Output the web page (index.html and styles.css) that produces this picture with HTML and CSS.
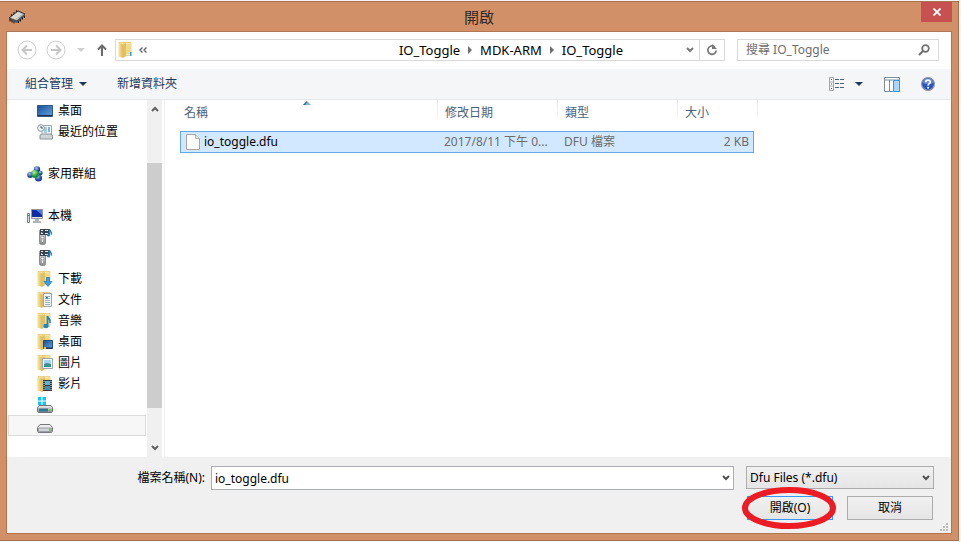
FILE: index.html
```html
<!DOCTYPE html>
<html lang="zh-Hant">
<head>
<meta charset="utf-8">
<title>開啟</title>
<link rel="stylesheet" href="styles.css">
</head>
<body>
<svg class="defs" aria-hidden="true">
  <defs>
    <linearGradient id="gold" x1="0" x2="1"><stop offset="0" stop-color="#f7e596"/><stop offset="1" stop-color="#dcb65a"/></linearGradient>
    <linearGradient id="screen" x1="0" y1="0" x2="1" y2="1"><stop offset="0" stop-color="#1c4d97"/><stop offset="1" stop-color="#5aa6e4"/></linearGradient>
    <linearGradient id="metal" x1="0" y1="0" x2="0" y2="1"><stop offset="0" stop-color="#f4f4f6"/><stop offset="1" stop-color="#85878c"/></linearGradient>
    <radialGradient id="green" cx=".4" cy=".3"><stop offset="0" stop-color="#b8f2a6"/><stop offset="1" stop-color="#1b9433"/></radialGradient>
    <radialGradient id="blue" cx=".4" cy=".3"><stop offset="0" stop-color="#a9c4f4"/><stop offset="1" stop-color="#1c429f"/></radialGradient>
    <symbol id="folder" viewBox="0 0 16 16"><path d="M1 .500h6v14H1z" fill="#f5e294" stroke="#dcc06c" stroke-width=".6"/><path d="M6 .500h7v13H6z" fill="#f8eaa8" stroke="#dbbb5e" stroke-width=".6"/><path d="M1 1l4 1.500V16l-4-1.500z" fill="url(#gold)"/><path d="M5 3l3-2v13l-3 2z" fill="#e0c064"/><path d="M8 2h4v10H8z" fill="#f0d987"/></symbol>
    <symbol id="player" viewBox="0 0 16 16"><rect x="2.500" y=".500" width="6" height="15" rx="2" fill="url(#metal)" stroke="#8c8c8c"/><path d="M5 7h1v6H5z" fill="#f6f6f6"/><circle cx="5.500" cy="8.500" r="1.500" fill="#eee" stroke="#999"/><path d="M3 0h9v6H3z" fill="#3c4348"/><path d="M4 1h2v1H4zM4 4h2v1H4zM8 1h3v1H8zM8 4h3v1H8z" fill="#dfe9ef"/><path d="M4 3h1v1H4z" fill="#6fe04c"/><path d="M12.500 6V0c0 2 2.500 2 2 5.500" fill="none" stroke="#1684c8" stroke-width="1.400"/><circle cx="11.500" cy="6" r="1.600" fill="#1684c8"/></symbol>
    <symbol id="chevron" viewBox="0 0 8 6"><path d="M1 1l3 3 3-3" fill="none" stroke="currentColor" stroke-width="2"/></symbol>
    <symbol id="tri-right" viewBox="0 0 4 8"><path d="M0 0l4 4-4 4z" fill="#6e6e6e"/></symbol>
    <symbol id="tri-down" viewBox="0 0 8 4"><path d="M0 0h8L4 4z" fill="currentColor"/></symbol>
  </defs>
</svg>
<main class="window">
  <header class="titlebar">
    <svg class="chip" viewBox="0 0 18 14"><path d="M1 8L10 1l7 3-8 7z" fill="#b9bab5" stroke="#34342f"/><path d="M3 7.500L10 2l4 2-7 5.500z" fill="#d8d8d3"/><path d="M1 8l8 3 8-7v2l-8 7-8-3z" fill="#555"/><path d="M2 9.500v2M4 10.500v2M6 11.500v2M10.500 11v2M12.500 9.500v2M14.500 7.500v2M16.500 6v2" stroke="#111"/><path d="M3 5.500l1-1M5.500 3.500l1-1M8 1.500l1-1" stroke="#111" stroke-width="1.200"/></svg>
    <h1 class="title">開啟</h1>
    <button class="close" aria-label="關閉"><svg viewBox="0 0 8 8"><path d="M.5.500l7 7M7.500.500l-7 7" stroke="#fff" stroke-width="1.800"/></svg></button>
  </header>
  <div class="dialog">
    <nav class="navbar">
      <button class="round" aria-label="上一頁"><svg viewBox="0 0 20 20"><circle cx="10" cy="10" r="9" fill="none" stroke="#cfcfcf"/><path d="M15 10H6M10 5.500L5.500 10l4.500 4.500" fill="none" stroke="#c6c6c6" stroke-width="2"/></svg></button>
      <button class="round" aria-label="下一頁"><svg viewBox="0 0 20 20"><circle cx="10" cy="10" r="9" fill="none" stroke="#cfcfcf"/><path d="M5 10h9M10 5.500l4.500 4.500-4.500 4.500" fill="none" stroke="#c6c6c6" stroke-width="2"/></svg></button>
      <button class="history" aria-label="最近的位置"><svg viewBox="0 0 8 4"><use href="#tri-down"/></svg></button>
      <button class="up" aria-label="上一層"><svg viewBox="0 0 10 12"><path d="M5 12V2M1 5.500l4-4 4 4" fill="none" stroke="#6b6b6b" stroke-width="2"/></svg></button>
      <div class="address">
        <svg class="address-icon" viewBox="0 0 16 16"><use href="#folder"/><path d="M12 10h1.500v4H12z" fill="#3fa0e8"/></svg>
        <button class="overflow" aria-label="上層資料夾"><svg viewBox="0 0 8 6"><path d="M3.500.500L1 3l2.500 2.500M7.500.500L5 3l2.500 2.500" fill="none" stroke="#666" stroke-width="1.400"/></svg></button>
        <div class="crumbs">
          <a href="#">IO_Toggle</a><svg class="sep" viewBox="0 0 4 8"><use href="#tri-right"/></svg><a href="#">MDK-ARM</a><svg class="sep" viewBox="0 0 4 8"><use href="#tri-right"/></svg><a href="#">IO_Toggle</a>
        </div>
        <button class="drop" aria-label="先前的位置"><svg viewBox="0 0 8 6"><use href="#chevron"/></svg></button>
        <button class="refresh" aria-label="重新整理"><svg viewBox="0 0 12 12"><path d="M8.500 2.700A4.200 4.200 0 1 0 10.200 6.500" fill="none" stroke="#777" stroke-width="1.700"/><path d="M6 0v5h5z" fill="#777"/></svg></button>
      </div>
      <label class="search"><input type="search" placeholder="搜尋 IO_Toggle" aria-label="搜尋 IO_Toggle"><svg viewBox="0 0 12 12"><circle cx="7.500" cy="4.500" r="3.300" fill="none" stroke="#707070" stroke-width="1.800"/><path d="M5 7L1 11" stroke="#707070" stroke-width="2.200"/></svg></label>
    </nav>
    <div class="toolbar">
      <button class="tool">組合管理<svg class="caret" viewBox="0 0 8 4"><use href="#tri-down"/></svg></button>
      <button class="tool">新增資料夾</button>
      <span class="grow"></span>
      <button class="view" aria-label="變更檢視"><svg class="view-icon" viewBox="0 0 16 14"><path d="M.500.500h4v13h-4zM.500 5h4M.500 9h4" fill="#fff" stroke="#9aa5b5"/><path d="M2 2h1v1H2zM2 11h1v1H2z" fill="#355b95"/><path d="M2 6.500h1v1H2z" fill="#b33"/><path d="M6 2.500h4M11 2.500h4M6 6.500h4M11 6.500h4M6 10.500h4M11 10.500h4" stroke="#51617a"/></svg><svg class="caret" viewBox="0 0 8 4"><use href="#tri-down"/></svg></button>
      <button class="pane" aria-label="預覽窗格"><svg viewBox="0 0 16 15"><path d="M.500.500h15v14H.500z" fill="#fff" stroke="#7e8b99"/><path d="M1 3h14M5.500 3v11" stroke="#7e8b99"/><path d="M9.500 3.500h6v11h-6z" fill="#a9d7fb" stroke="#3c94dd"/></svg></button>
      <button class="help" aria-label="說明"><svg viewBox="0 0 14 14"><circle cx="7" cy="7" r="6.400" fill="#2c55bd" stroke="#8c95a6" stroke-width="1.200"/><path d="M2 6a5 4.500 0 0 1 10 0q-5 2-10 0z" fill="#688be0"/><path d="M4.700 5.200C4.700 2.500 9.300 2.500 9.300 5c0 1.700-2.200 1.700-2.200 3.500M7.100 9.700v1.700" fill="none" stroke="#fff" stroke-width="1.700"/></svg></button>
    </div>
    <div class="content">
      <ul class="tree">
        <li class="sub"><svg viewBox="0 0 16 16"><path d="M.500 2.500h15v11H.500z" fill="url(#screen)" stroke="#36577e"/><path d="M1 12.500h14" stroke="#1b2f4d"/></svg>桌面</li>
        <li class="sub"><svg viewBox="0 0 16 16"><path d="M5 1.500h9.500v10H5z" fill="#f4f7fa" stroke="#9ba6ad"/><path d="M7 4h3M7 6h3M7 8h3" stroke="#55a2c9"/><path d="M11 3h2v5h-2z" fill="#7eb7d5"/><path d="M3 11l2-1h9l1.500 2v3H3z" fill="#d0d5d8" stroke="#8c969b"/><circle cx="4" cy="4" r="3.400" fill="#eef5f8" stroke="#8d9ba3"/><path d="M4 2v2h2" fill="none" stroke="#456"/></svg>最近的位置</li>
        <li class="blank"></li>
        <li><svg viewBox="0 0 16 16"><circle cx="10" cy="3.500" r="3.200" fill="url(#blue)"/><circle cx="3.200" cy="9" r="3" fill="url(#blue)"/><circle cx="11.500" cy="12" r="3.600" fill="url(#blue)"/><circle cx="13.500" cy="7" r="2.200" fill="url(#blue)"/><circle cx="8" cy="8" r="4" fill="url(#green)"/></svg>家用群組</li>
        <li class="blank"></li>
        <li><svg viewBox="0 0 16 16"><path d="M.500 5.500h2v9h-2z" fill="#d7dce0" stroke="#7d8489"/><path d="M1 7h1v1H1z" fill="#29a536"/><path d="M4.500 1.500h11v9h-11z" fill="#e6e9ec" stroke="#92989e"/><path d="M5 2h10v7H5z" fill="#102ca3"/><path d="M9 2h6v5z" fill="#4c7ce8"/><path d="M8 11h4v2H8zM6 13h8v2H6z" fill="#afb4b8"/></svg>本機</li>
        <li class="sub"><svg viewBox="0 0 16 16"><use href="#player"/></svg></li>
        <li class="sub"><svg viewBox="0 0 16 16"><use href="#player"/></svg></li>
        <li class="sub"><svg viewBox="0 0 16 16"><use href="#folder"/><path d="M9.500 6.500h3v4h2.500L11 15.500 7 10.500h2.500z" fill="#36a0e7" stroke="#1c73b8" stroke-width=".7"/></svg>下載</li>
        <li class="sub"><svg viewBox="0 0 16 16"><use href="#folder"/><path d="M6.500 1.500h8v13h-8z" fill="#f6f9fb" stroke="#9ca4a9"/><path d="M8 4.500h5M8 6.500h5M8 8.500h5M8 10.500h5M8 12.500h5" stroke="#9ab0bf"/><path d="M9 5h2v2H9z" fill="#3b8fcb"/></svg>文件</li>
        <li class="sub"><svg viewBox="0 0 16 16"><use href="#folder"/><path d="M10.500 13V3c0 3 4 3 2.500 7" fill="none" stroke="#1c86ca" stroke-width="1.800"/><ellipse cx="9" cy="13" rx="2.600" ry="2.200" fill="#1c86ca"/></svg>音樂</li>
        <li class="sub"><svg viewBox="0 0 16 16"><use href="#folder"/><path d="M6.500 6.500h9v8h-9z" fill="url(#screen)" stroke="#2b4a78"/><path d="M7 14h8" stroke="#16233c"/><path d="M7 13h2v2H7z" fill="#f4c531"/></svg>桌面</li>
        <li class="sub"><svg viewBox="0 0 16 16"><use href="#folder"/><path d="M5.500 3.500h10v10h-10z" fill="#f7f9fa" stroke="#a0a7ab"/><path d="M7 5h7v4H7z" fill="#a4d4ef"/><path d="M7 9l3-1 4 1v3H7z" fill="#3c9090"/></svg>圖片</li>
        <li class="sub"><svg viewBox="0 0 16 16"><use href="#folder"/><path d="M6 4h9v11H6z" fill="#30383d"/><path d="M8 5h5v4H8z" fill="#5db2dd"/><path d="M8 10h5v4H8z" fill="#3e8db5"/><path d="M7 5v10M14 5v10" stroke="#e8e8e8" stroke-dasharray="1 1"/></svg>影片</li>
        <li class="sub"><svg viewBox="0 0 16 16"><path d="M1 0h3.500v3.500H1zM5.500 0H9v3.500H5.500zM1 4.500h3.500V8H1zM5.500 4.500H9V8H5.500z" fill="#16c4f5"/><path d="M2 8.500h12l1.500 2v4l-1 1h-13l-1-1v-4z" fill="url(#metal)" stroke="#6c7378"/><path d="M2 11.500h9v3H2z" fill="#33758f"/><path d="M12 12h2v2h-2z" fill="#62d744"/></svg></li>
        <li class="sub selected"><svg viewBox="0 0 16 16"><path d="M3 6.500h10l2.500 3v4l-1 1h-13l-1-1v-4z" fill="#ededf0" stroke="#77797e"/><path d="M1.500 10h13v3.500h-13z" fill="#d3d4d9" stroke="#9b9ca2"/><path d="M12 10.500h1.500v3H12z" fill="#55c83a"/></svg></li>
      </ul>
      <div class="scrollbar" aria-hidden="true">
        <svg class="arrow-up" viewBox="0 0 8 6"><use href="#chevron"/></svg>
        <div class="track"><div class="thumb"></div></div>
        <svg class="arrow-down" viewBox="0 0 8 6"><use href="#chevron"/></svg>
      </div>
      <section class="files">
        <table>
          <thead><tr><th class="name">名稱<svg class="sorted" viewBox="0 0 8 4"><path d="M0 4l4-4 4 4z" fill="#80b4d2"/><path d="M0 4l4-4v1L2 4z" fill="#32617e"/></svg></th><th class="date">修改日期</th><th class="type">類型</th><th class="size">大小</th></tr></thead>
          <tbody><tr><td><span class="file"><svg viewBox="0 0 14 16"><path d="M.500.500h9l4 4v11H.500z" fill="#fbfbfa" stroke="#a8a6a0"/><path d="M9.500.500v4h4" fill="#e5e4e1" stroke="#b5b3ae"/></svg>io_toggle.dfu</span></td><td>2017/8/11 下午 0...</td><td>DFU 檔案</td><td class="amount">2 KB</td></tr></tbody>
        </table>
      </section>
    </div>
    <form class="footer" onsubmit="return false">
      <label class="filename-label" for="filename">檔案名稱(N):</label>
      <div class="combo filename"><input id="filename" type="text" value="io_toggle.dfu"><svg viewBox="0 0 8 6"><use href="#chevron"/></svg></div>
      <div class="combo filter"><select aria-label="檔案類型"><option>Dfu Files (*.dfu)</option></select><svg viewBox="0 0 8 6"><use href="#chevron"/></svg></div>
      <div class="actions">
        <div class="open-wrap"><button class="button primary" type="submit">開啟(O)</button><svg class="ring" viewBox="0 0 94 42"><ellipse cx="47" cy="21" rx="44" ry="18" fill="none" stroke="#ed1c24" stroke-width="6"/></svg></div>
        <button class="button" type="button">取消</button>
      </div>
      <svg class="grip" viewBox="0 0 8 8"><path d="M6 0h2v2H6zM3 3h2v2H3zM6 3h2v2H6zM0 6h2v2H0zM3 6h2v2H3zM6 6h2v2H6z" fill="#bcbcbc"/></svg>
    </form>
  </div>
</main>
</body>
</html>
```
FILE: styles.css
```css
* { box-sizing: border-box; }

body {
  margin: 0;
  height: 100vh;
  padding: 1px 2px 1px 0;
  background: #f4f6f6;
  color: #000;
  font: 12px/20px "Noto Sans", "Noto Sans CJK TC", sans-serif;
  overflow: hidden;
}

button, input, select {
  margin: 0;
  padding: 0;
  border: 0;
  background: none;
  color: inherit;
  font: inherit;
}

button { display: flex; align-items: center; justify-content: center; }
svg { display: block; flex: none; }
a { color: inherit; text-decoration: none; }
.defs { position: absolute; width: 0; height: 0; }

.window {
  display: flex;
  flex-direction: column;
  height: 100%;
  padding: 0 6px 6px;
  border: solid #a8714e;
  border-width: 1px 1px 1px 0;
  background: #d29068;
}

.titlebar {
  display: grid;
  grid-template-columns: 1fr auto 1fr;
  align-items: center;
  height: 29px;
}
.chip { width: 18px; height: 14px; margin-left: 2px; }
.title { margin: 0; font-size: 15px; font-weight: 400; color: #2e2925; }
.close {
  align-self: start;
  justify-self: end;
  width: 31px;
  height: 20px;
  background: #c75050;
}
.close svg { width: 8px; height: 8px; }

.dialog {
  display: flex;
  flex: 1;
  flex-direction: column;
  min-height: 0;
  border: 1px solid #b27551;
  background: #fff;
}

.navbar {
  display: flex;
  align-items: center;
  height: 37px;
  padding: 0 12px 2px 10px;
}
.round { margin-right: 9px; }
.round svg { width: 20px; height: 20px; }
.history { width: 12px; color: #cfcfcf; }
.history svg { width: 8px; height: 4px; }
.up { width: 22px; margin: 0 2px 0 4px; }
.up svg { width: 10px; height: 12px; }

.address {
  display: flex;
  flex: 1;
  align-items: center;
  height: 22px;
  border: 1px solid #d9d9d9;
}
.address-icon { width: 16px; height: 16px; margin-left: 2px; }
.overflow { width: 18px; }
.overflow svg { width: 8px; height: 6px; }
.crumbs {
  display: flex;
  flex: 1;
  align-items: center;
  justify-content: flex-end;
  padding-right: 58px;
  font-size: 13px;
}
.sep { width: 4px; height: 8px; margin: 0 8px; }
.drop { width: 18px; color: #777; }
.drop svg { width: 8px; height: 6px; }
.refresh { width: 25px; height: 20px; border-left: 1px solid #d9d9d9; }
.refresh svg { width: 12px; height: 12px; }

.search {
  display: flex;
  align-items: center;
  width: 202px;
  height: 22px;
  margin-left: 12px;
  padding: 0 8px;
  border: 1px solid #d9d9d9;
}
.search input { flex: 1; min-width: 0; outline: 0; appearance: none; }
.search input::placeholder { color: #6d6d6d; }
.search svg { width: 12px; height: 12px; }

.toolbar {
  display: flex;
  align-items: center;
  height: 31px;
  padding: 0 16px 0 18px;
  border-bottom: 1px solid #e5e8eb;
  background: #f5f6f7;
  color: #1e395b;
}
.tool { margin-right: 30px; }
.caret { width: 8px; height: 4px; margin-left: 6px; }
.grow { flex: 1; }
.view-icon { width: 16px; height: 14px; margin-right: 4px; }
.pane { margin: 0 21px; }
.pane svg { width: 16px; height: 15px; }
.help svg { width: 14px; height: 14px; }

.content { display: flex; flex: 1; min-height: 0; }

.tree {
  width: 140px;
  margin: 0;
  padding: 0 1px;
  list-style: none;
  overflow: hidden;
}
.tree li {
  display: flex;
  align-items: center;
  gap: 5px;
  height: 21px;
  padding-left: 19px;
}
.tree .sub { padding-left: 29px; }
.tree svg { width: 16px; height: 16px; }
.tree .selected {
  padding-left: 28px;
  border: 1px solid #dcdcdc;
  background: #f7f7f7;
}

.scrollbar {
  display: flex;
  flex-direction: column;
  align-items: center;
  width: 15px;
  padding: 6px 0;
  background: #f0f0f0;
  color: #606060;
}
.scrollbar svg { width: 8px; height: 6px; }
.arrow-up { transform: rotate(180deg); }
.track { flex: 1; align-self: stretch; margin: 5px 0; }
.thumb { height: 76%; margin-top: 46px; background: #cdcdcd; }

.files {
  flex: 1;
  min-width: 0;
  margin-left: 2px;
  padding-left: 15px;
  border-left: 1px solid #f0f0f0;
}
table {
  width: 574px;
  table-layout: fixed;
  border-collapse: separate;
  border-spacing: 0;
}
th {
  position: relative;
  height: 31px;
  padding: 3px 4px 0 7px;
  color: #4c607a;
  font-weight: 400;
  text-align: left;
  vertical-align: top;
}
th::after {
  content: "";
  position: absolute;
  top: 0;
  right: 0;
  width: 1px;
  height: 21px;
  background: linear-gradient(#dbe5ee, #eef3f7 70%, #fff);
}
.name { width: 258px; padding-left: 4px; }
.date, .type { width: 120px; }
.size::after { right: -4px; }
.sorted {
  position: absolute;
  top: 1px;
  left: 123px;
  width: 8px;
  height: 4px;
}
td {
  height: 22px;
  padding: 0 4px 0 6px;
  border: solid #66a7e8;
  border-width: 1px 0;
  background: #d1e8ff;
  color: #6d6d6d;
  white-space: nowrap;
}
td:first-child { padding-left: 5px; border-left-width: 1px; color: #000; }
td:last-child { border-right-width: 1px; }
.file { display: flex; align-items: center; gap: 4px; }
.file svg { width: 14px; height: 16px; }
.amount { text-align: right; }

.footer {
  position: relative;
  display: grid;
  grid-template-columns: 198px 1fr 188px;
  row-gap: 6px;
  align-items: start;
  padding: 9px 17px 13px 0;
  background: #f0f0f0;
}
.filename-label { line-height: 24px; text-align: right; }
.combo { position: relative; }
.combo svg {
  position: absolute;
  top: 9px;
  right: 4px;
  width: 8px;
  height: 6px;
  color: #505050;
  pointer-events: none;
}
.filename { margin: 0 12px 0 6px; }
.filename input {
  width: 100%;
  height: 24px;
  padding: 0 3px;
  border: 1px solid #abadb3;
  background: #fff;
}
.filter select {
  display: block;
  width: 100%;
  height: 23px;
  padding: 0 3px;
  border: 1px solid #acacac;
  border-radius: 0;
  background: linear-gradient(#f0f0f0, #e5e5e5);
  appearance: none;
}
.actions {
  grid-column: 1 / -1;
  display: flex;
  justify-content: flex-end;
  gap: 14px;
  padding-right: 1px;
}
.open-wrap { position: relative; }
.button {
  width: 86px;
  height: 24px;
  border: 1px solid #acacac;
  background: linear-gradient(#f0f0f0, #e5e5e5);
}
.primary { border-color: #3399ff; }
.ring {
  position: absolute;
  top: -9px;
  left: -5px;
  width: 94px;
  height: 42px;
  pointer-events: none;
}
.grip { position: absolute; right: 3px; bottom: 2px; width: 8px; height: 8px; }
```
